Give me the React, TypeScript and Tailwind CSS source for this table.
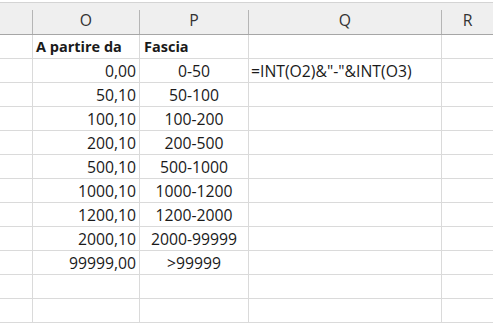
import React from "react";

const rows: { o: string; p: string; q?: string; bold?: boolean }[] = [
  { o: "A partire da", p: "Fascia", bold: true },
  { o: "0,00", p: "0-50", q: '=INT(O2)&"-"&INT(O3)' },
  { o: "50,10", p: "50-100" },
  { o: "100,10", p: "100-200" },
  { o: "200,10", p: "200-500" },
  { o: "500,10", p: "500-1000" },
  { o: "1000,10", p: "1000-1200" },
  { o: "1200,10", p: "1200-2000" },
  { o: "2000,10", p: "2000-99999" },
  { o: "99999,00", p: ">99999" },
  { o: "", p: "" },
  { o: "", p: "" },
];

const cols = ["", "O", "P", "Q", "R"];

export default function App() {
  return (
    <div
      className="w-[493px] h-[330px] overflow-hidden bg-white text-[15.75px] leading-[20px] text-[#1a1a1a]"
      style={{ fontFamily: "'Open Sans', 'Liberation Sans', Arial, sans-serif" }}
    >
      <div className="h-[2px] bg-white" />
      <div className="grid grid-cols-[33px_107px_109px_193px_1fr] h-[33px] bg-[#efefef] border-t border-[#d4d4d4] border-b border-b-[#a6a6a6]">
        {cols.map((c, i) => (
          <div key={i} className="flex items-stretch">
            <div className="flex-1 flex items-center justify-center pt-[3px] text-[#333]">{c}</div>
            {i < cols.length - 1 && <div className="w-px self-end h-[24px] bg-[#b5b5b5]" />}
          </div>
        ))}
      </div>
      {rows.map((r, i) => (
        <div key={i} className="grid grid-cols-[33px_107px_109px_193px_1fr] h-[24px] border-b border-[#dadada]">
          <div className="border-r border-[#dadada]" />
          <div
            className={`border-r border-[#dadada] flex items-end pb-[1px] ${
              r.bold ? "justify-start pl-[3px] font-bold text-[14.5px]" : "justify-end pr-[3px]"
            }`}
          >
            {r.o}
          </div>
          <div
            className={`border-r border-[#dadada] flex items-end pb-[1px] ${
              r.bold ? "justify-start pl-[4px] font-bold text-[14.5px]" : "justify-center"
            }`}
          >
            {r.p}
          </div>
          <div className="border-r border-[#dadada] flex items-end pb-[1px] pl-[2px] whitespace-nowrap">
            {r.q ?? ""}
          </div>
          <div />
        </div>
      ))}
    </div>
  );
}
